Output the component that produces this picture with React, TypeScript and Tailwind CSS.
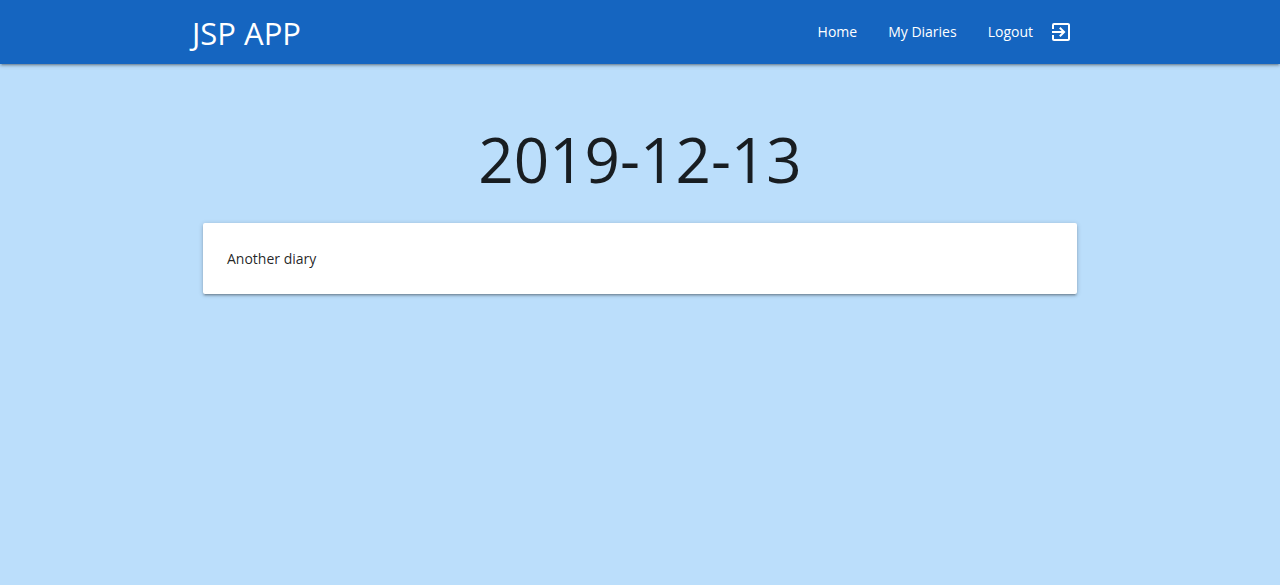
import { MdExitToApp } from "react-icons/md";

const shadow =
  "shadow-[0_2px_2px_0_rgba(0,0,0,0.14),0_3px_1px_-2px_rgba(0,0,0,0.12),0_1px_5px_0_rgba(0,0,0,0.2)]";

export default function App() {
  return (
    <div className="min-h-screen bg-[#bbdefb] font-['Segoe_UI','Open_Sans',sans-serif] text-sm text-black/87">
      <nav className={`relative h-16 bg-[#1565c0] text-white ${shadow}`}>
        <div className="mx-auto flex h-full w-[70%] items-center justify-between">
          <a href="#" className="pt-0.5 text-[31px] leading-16">
            JSP APP
          </a>
          <ul className="flex gap-px leading-[66px]">
            <li>
              <a href="#" className="block px-[15px]">
                Home
              </a>
            </li>
            <li>
              <a href="#" className="block px-[15px]">
                My Diaries
              </a>
            </li>
            <li>
              <a href="#" className="flex items-center gap-4 px-[15px]">
                Logout
                <MdExitToApp size={24} aria-hidden="true" />
              </a>
            </li>
          </ul>
        </div>
      </nav>
      <main className="mx-auto w-[70%] px-[11px]">
        <h1 className="pt-[60px] pb-[29px] text-center text-[62px] leading-[70px]">2019-12-13</h1>
        <section className={`rounded-xs bg-white p-6 leading-[23px] ${shadow}`}>
          <p>Another diary</p>
        </section>
      </main>
    </div>
  );
}
